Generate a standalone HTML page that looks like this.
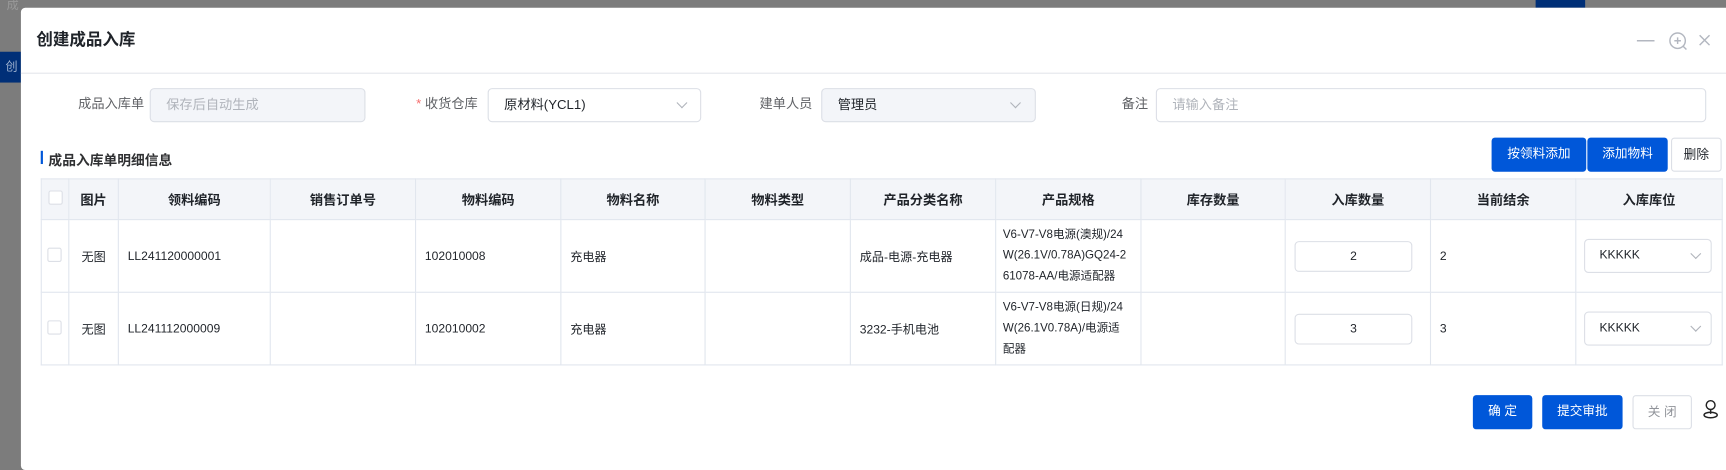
<!DOCTYPE html>
<html><head><meta charset="utf-8"><style>
*{box-sizing:border-box;margin:0;padding:0}
body{width:1726px;height:446px;overflow:hidden;background:#7c7c7c;font-family:"Liberation Sans","Noto Sans CJK SC",sans-serif;font-size:12px;color:#1f2329;position:relative}
#w{position:absolute;left:0;top:0;width:1568px;height:406px;transform:scale(1.1008);transform-origin:0 0}
.abs{position:absolute}
.modal{position:absolute;left:19px;top:7px;width:1560px;height:420px;background:#fff;border-radius:4px}
.inp{position:absolute;height:31px;border:1px solid #dcdfe6;border-radius:4px;font-size:12px;line-height:29px;padding-left:14px}
.lbl{position:absolute;font-size:12px;color:#606266;line-height:31px}
.chev{position:absolute;width:7px;height:7px;border-right:1px solid #b0b4bb;border-bottom:1px solid #b0b4bb;transform:rotate(45deg)}
table{position:absolute;left:37px;top:162px;border-collapse:collapse;font-size:11px;table-layout:fixed;width:1527px}
td,th{border:1px solid #e1e6ee;height:66px;padding:0 8px;text-align:left;vertical-align:middle;color:#1f2329;font-weight:normal;white-space:nowrap;overflow:hidden}
th{height:37px;background:#f3f5f9;font-weight:bold;text-align:center;color:#1f2329;font-size:12px}
.cb{display:inline-block;width:13px;height:13px;border:1px solid #dcdfe6;border-radius:2px;background:#fff}
.btn{position:absolute;height:31px;border-radius:3px;background:#0057d9;color:#fff;font-size:11.5px;line-height:31px;text-align:center}
.q{display:block;width:107px;height:28px;border:1px solid #dcdfe6;border-radius:4px;line-height:26px;text-align:center}
.sel{position:relative;width:116px;height:31px;border:1px solid #dcdfe6;border-radius:4px;line-height:29px;padding-left:13px}
.spec{line-height:19px;font-size:10.5px;padding:0 6px}
</style></head><body><div id="w">
<div class="abs" style="left:0;top:47px;width:19px;height:28px;background:#002f77;color:#9fb3d0;font-size:11px;line-height:28px;padding-left:5px">创</div>
<div class="abs" style="left:1395px;top:0;width:45px;height:7px;background:#002f77"></div>
<div class="abs" style="left:6px;top:0;color:#999;font-size:11px;line-height:10px">成</div>
<div class="modal"></div>
<div class="abs" style="left:33px;top:25px;font-size:15px;font-weight:bold;color:#1f2329">创建成品入库</div>
<div class="abs" style="left:19px;top:66px;width:1560px;height:1px;background:#e4e6eb"></div>
<svg class="abs" style="left:1486px;top:28px" width="72" height="20" viewBox="0 0 72 20" fill="none" stroke="#b3b7c0" stroke-width="1.3">
<line x1="1" y1="9" x2="17" y2="9"/>
<circle cx="38" cy="9" r="7"/><line x1="38" y1="6" x2="38" y2="12"/><line x1="35" y1="9" x2="41" y2="9"/><line x1="43" y1="14" x2="46" y2="17"/>
<line x1="58" y1="4" x2="67" y2="13"/><line x1="67" y1="4" x2="58" y2="13"/>
</svg>
<div class="lbl" style="left:71px;top:79px">成品入库单</div>
<div class="inp" style="left:136px;top:80px;width:196px;background:#f3f5f9;color:#b0b4bb">保存后自动生成</div>
<div class="lbl" style="left:378px;top:79px"><span style="color:#f56c6c">*</span> 收货仓库</div>
<div class="inp" style="left:443px;top:80px;width:194px;color:#1f2329">原材料(YCL1)</div>
<div class="chev" style="left:616px;top:90px"></div>
<div class="lbl" style="left:690px;top:79px">建单人员</div>
<div class="inp" style="left:746px;top:80px;width:195px;background:#f3f5f9;color:#1f2329">管理员</div>
<div class="chev" style="left:919px;top:90px"></div>
<div class="lbl" style="left:1019px;top:79px">备注</div>
<div class="inp" style="left:1050px;top:80px;width:500px;color:#b0b4bb">请输入备注</div>
<div class="abs" style="left:37px;top:137px;width:2px;height:12px;background:#0057d9"></div>
<div class="abs" style="left:44px;top:135px;font-size:12.5px;font-weight:bold;color:#303133">成品入库单明细信息</div>
<div class="btn" style="left:1355px;top:125px;width:86px">按领料添加</div>
<div class="btn" style="left:1442px;top:125px;width:73px">添加物料</div>
<div class="btn" style="left:1518px;top:125px;width:46px;background:#fff;border:1px solid #dcdfe6;color:#1f2329">删除</div>
<table>
<colgroup><col style="width:25px"><col style="width:45px"><col style="width:138px"><col style="width:132px"><col style="width:132px"><col style="width:131px"><col style="width:132px"><col style="width:132px"><col style="width:132px"><col style="width:131px"><col style="width:132px"><col style="width:132px"><col style="width:133px"></colgroup>
<tr><th style="padding:0 5px"><span class="cb"></span></th><th>图片</th><th>领料编码</th><th>销售订单号</th><th>物料编码</th><th>物料名称</th><th>物料类型</th><th>产品分类名称</th><th>产品规格</th><th>库存数量</th><th>入库数量</th><th>当前结余</th><th>入库库位</th></tr>
<tr><td style="padding:0 5px"><span class="cb"></span></td><td style="text-align:center;padding:0">无图</td><td>LL241120000001</td><td></td><td>102010008</td><td>充电器</td><td></td><td>成品-电源-充电器</td><td class="spec">V6-V7-V8电源(澳规)/24<br>W(26.1V/0.78A)GQ24-2<br>61078-AA/电源适配器</td><td></td><td><span class="q">2</span></td><td>2</td><td style="padding-left:7px"><div class="sel">KKKKK<div class="chev" style="left:97px;top:9px"></div></div></td></tr>
<tr><td style="padding:0 5px"><span class="cb"></span></td><td style="text-align:center;padding:0">无图</td><td>LL241112000009</td><td></td><td>102010002</td><td>充电器</td><td></td><td>3232-手机电池</td><td class="spec">V6-V7-V8电源(日规)/24<br>W(26.1V0.78A)/电源适<br>配器</td><td></td><td><span class="q">3</span></td><td>3</td><td style="padding-left:7px"><div class="sel">KKKKK<div class="chev" style="left:97px;top:9px"></div></div></td></tr>
</table>
<div class="btn" style="left:1338px;top:359px;width:54px">确 定</div>
<div class="btn" style="left:1401px;top:359px;width:73px">提交审批</div>
<div class="btn" style="left:1483px;top:359px;width:54px;background:#fff;border:1px solid #dcdfe6;color:#909399">关 闭</div>
<svg class="abs" style="left:1545px;top:362px" width="18" height="20" viewBox="0 0 18 20" fill="none" stroke="#222" stroke-width="1.3">
<circle cx="9" cy="6" r="4"/><line x1="9" y1="10" x2="9" y2="14"/><ellipse cx="9" cy="15" rx="6" ry="2.5"/>
</svg>
</div></body></html>
